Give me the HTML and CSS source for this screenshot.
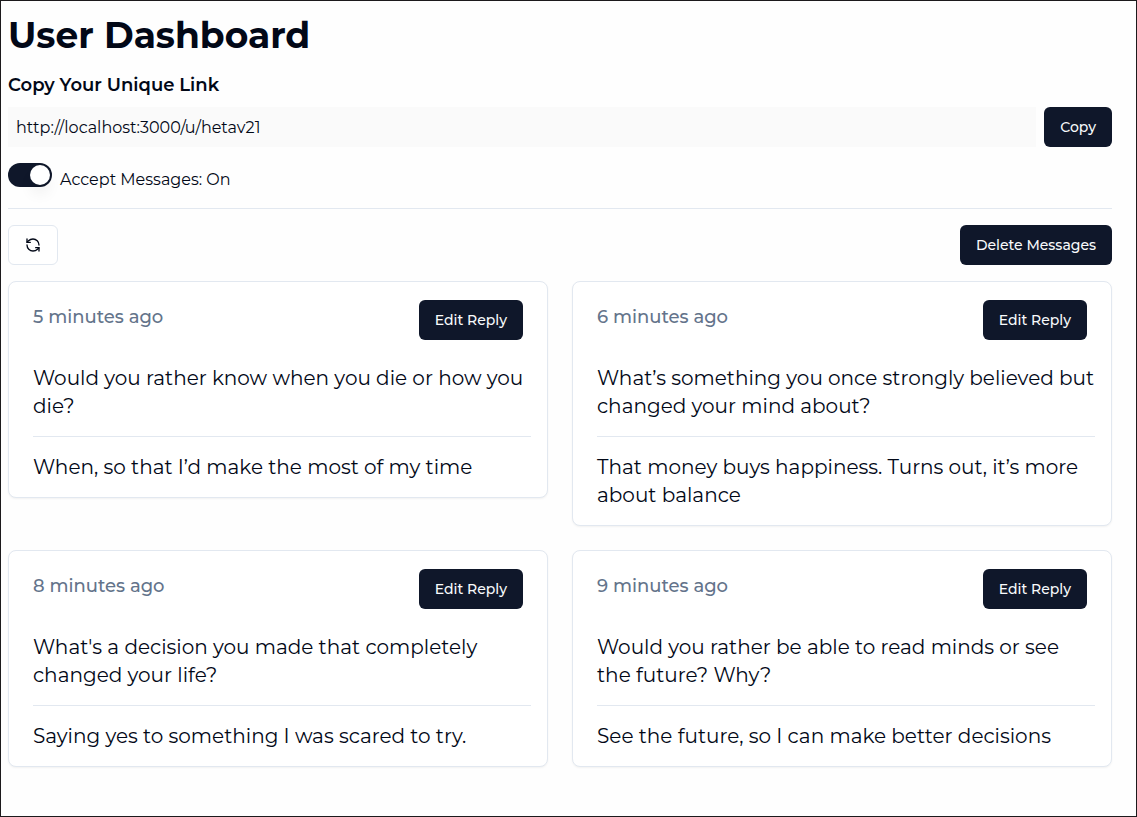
FILE: index.html
```html
<!DOCTYPE html>
<html lang="en">
<head>
<meta charset="utf-8">
<meta name="viewport" content="width=device-width, initial-scale=1">
<title>User Dashboard</title>
<link rel="stylesheet" href="styles.css">
</head>
<body>
<main class="dashboard">
  <h1 class="title">User Dashboard</h1>
  <section class="link-section">
    <h2 class="subtitle"><label for="link">Copy Your Unique Link</label></h2>
    <div class="link-row">
      <input class="link-input" id="link" type="text" value="http://localhost:3000/u/hetav21" readonly>
      <button class="button" type="button">Copy</button>
    </div>
  </section>
  <div class="accept">
    <input class="switch" id="accept" type="checkbox" role="switch" checked>
    <label class="accept-label" for="accept">Accept Messages: On</label>
  </div>
  <hr class="divider">
  <div class="toolbar">
    <button class="button button-outline" type="button" aria-label="Refresh">
      <svg class="icon" viewBox="0 0 24 24" fill="none" stroke="currentColor" stroke-width="2" stroke-linecap="round" stroke-linejoin="round" aria-hidden="true">
        <path d="M21 12a9 9 0 0 0-9-9 9.75 9.75 0 0 0-6.74 2.74L3 8"/>
        <path d="M3 3v5h5"/>
        <path d="M3 12a9 9 0 0 0 9 9 9.75 9.75 0 0 0 6.74-2.74L21 16"/>
        <path d="M16 16h5v5"/>
      </svg>
    </button>
    <button class="button" type="button">Delete Messages</button>
  </div>
  <div class="cards">
    <article class="card">
      <header class="card-header">
        <span class="time">5 minutes ago</span>
        <button class="button" type="button">Edit Reply</button>
      </header>
      <div class="card-body">
        <p class="message">Would you rather know when you die or how you die?</p>
        <hr class="divider">
        <p class="message">When, so that I’d make the most of my time</p>
      </div>
    </article>
    <article class="card">
      <header class="card-header">
        <span class="time">6 minutes ago</span>
        <button class="button" type="button">Edit Reply</button>
      </header>
      <div class="card-body">
        <p class="message">What’s something you once strongly believed but changed your mind about?</p>
        <hr class="divider">
        <p class="message">That money buys happiness. Turns out, it’s more about balance</p>
      </div>
    </article>
    <article class="card">
      <header class="card-header">
        <span class="time">8 minutes ago</span>
        <button class="button" type="button">Edit Reply</button>
      </header>
      <div class="card-body">
        <p class="message">What's a decision you made that completely changed your life?</p>
        <hr class="divider">
        <p class="message">Saying yes to something I was scared to try.</p>
      </div>
    </article>
    <article class="card">
      <header class="card-header">
        <span class="time">9 minutes ago</span>
        <button class="button" type="button">Edit Reply</button>
      </header>
      <div class="card-body">
        <p class="message">Would you rather be able to read minds or see the future? Why?</p>
        <hr class="divider">
        <p class="message">See the future, so I can make better decisions</p>
      </div>
    </article>
  </div>
</main>
</body>
</html>
```

FILE: styles.css
```css
*, *::before, *::after {
  box-sizing: border-box;
}

body {
  margin: 0;
  min-height: 100vh;
  border: 1px solid #1c1a1c;
  background: #fefefe;
  color: #020817;
  font-family: Montserrat, Inter, sans-serif;
  font-size: 16px;
  line-height: 24px;
}

h1, h2, p, hr {
  margin: 0;
}

button, input {
  font: inherit;
  color: inherit;
}

.dashboard {
  padding: 14px 24px 24px 7px;
}

.title {
  margin-bottom: 16px;
  font-size: 36px;
  line-height: 40px;
  font-weight: 700;
}

.link-section {
  margin-bottom: 16px;
}

.subtitle {
  margin-bottom: 8px;
  font-size: 18px;
  line-height: 28px;
  font-weight: 600;
}

.link-row {
  display: flex;
  align-items: center;
  gap: 8px;
}

.link-input {
  flex: 1;
  min-width: 0;
  height: 40px;
  padding: 8px;
  border: 0;
  background: #fafafa;
}

.button {
  display: inline-flex;
  align-items: center;
  justify-content: center;
  height: 40px;
  padding: 0 16px;
  border: 0;
  border-radius: 6px;
  background: #0f172a;
  color: #f8fafc;
  font-size: 14px;
  line-height: 20px;
  font-weight: 500;
  white-space: nowrap;
}

.button-outline {
  border: 1px solid #e2e8f0;
  background: #fff;
  color: #020817;
}

.icon {
  width: 16px;
  height: 16px;
}

.accept {
  display: flex;
  gap: 8px;
  margin-bottom: 16px;
}

.switch {
  appearance: none;
  display: flex;
  width: 44px;
  height: 24px;
  margin: 0;
  padding: 2px;
  border-radius: 12px;
  background: #0f172a;
}

.switch::before {
  content: "";
  width: 20px;
  height: 20px;
  border-radius: 50%;
  background: #fff;
  box-shadow: 0 10px 15px -3px rgb(0 0 0 / 10%);
}

.switch:checked {
  justify-content: flex-end;
}

.switch:not(:checked) {
  background: #e2e8f0;
}

.accept-label {
  padding-top: 5px;
}

.divider {
  height: 1px;
  border: 0;
  background: #e2e8f0;
}

.toolbar {
  display: flex;
  justify-content: space-between;
  margin: 16px 0;
}

.cards {
  display: grid;
  grid-template-columns: repeat(2, minmax(0, 1fr));
  align-items: start;
  gap: 24px;
}

.card {
  border: 1px solid #e2e8f0;
  border-radius: 8px;
  background: #fff;
  box-shadow: 0 1px 2px rgb(0 0 0 / 5%);
}

.card-header {
  display: flex;
  align-items: flex-start;
  justify-content: space-between;
  padding: 18px 24px 24px;
}

.time {
  padding-top: 3px;
  color: #64748b;
  font-size: 18px;
  line-height: 28px;
  font-weight: 500;
}

.card-body {
  display: grid;
  gap: 16px;
  padding: 0 16px 16px 24px;
}

.message {
  font-size: 20px;
  line-height: 28px;
}

@media (max-width: 767px) {
  .cards {
    grid-template-columns: minmax(0, 1fr);
  }
}
```
